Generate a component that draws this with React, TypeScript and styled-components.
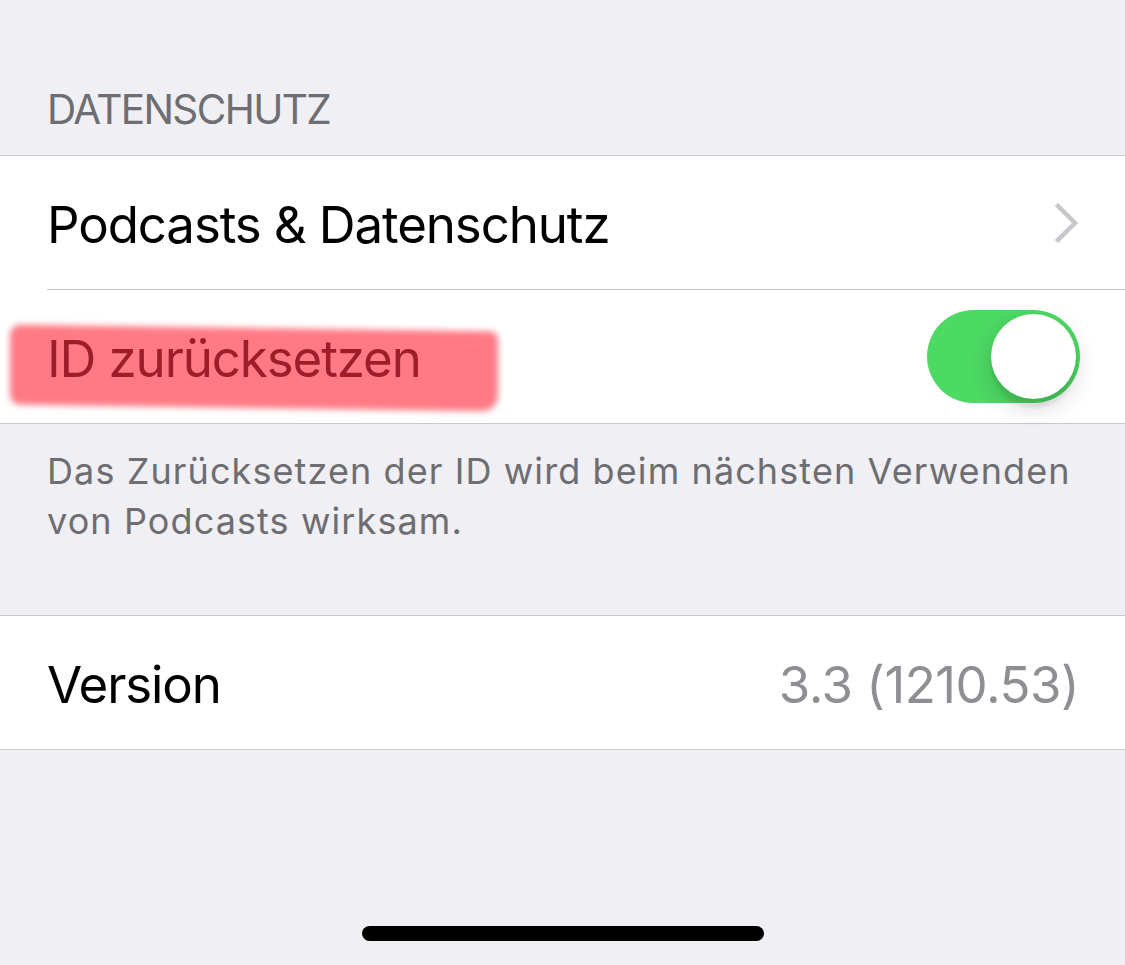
import React from "react";
import styled, { createGlobalStyle } from "styled-components";

const Global = createGlobalStyle`
  html, body { margin: 0; padding: 0; background: #efeff4; }
  body { font-family: Inter, "Noto Sans", sans-serif; -webkit-font-smoothing: antialiased; }
`;

const Page = styled.div`
  width: 1125px;
  height: 965px;
  background: #efeff4;
  display: flex;
  flex-direction: column;
  position: relative;
  overflow: hidden;
`;

const SectionHeader = styled.div`
  height: 155px;
  box-sizing: border-box;
  padding: 0 47px 21px;
  display: flex;
  align-items: flex-end;
  font-size: 40.5px;
  color: #6d6d72;
  letter-spacing: -1.6px;
`;

const Group = styled.div`
  background: #ffffff;
  border-top: 1px solid #c8c7cc;
  border-bottom: 1px solid #c8c7cc;
`;

const Row = styled.div<{ $divider?: boolean }>`
  height: 133px;
  margin-left: 47px;
  padding-right: 46px;
  display: flex;
  align-items: center;
  justify-content: space-between;
  border-bottom: ${(p) => (p.$divider ? "1px solid #c8c7cc" : "none")};
  position: relative;
`;

const Label = styled.span<{ $color?: string }>`
  font-size: 51px;
  color: ${(p) => p.$color || "#000"};
  letter-spacing: -1.1px;
  position: relative;
  z-index: 1;
  margin-top: 4px;
`;

const Value = styled.span`
  font-size: 51px;
  color: #8e8e93;
  letter-spacing: -0.5px;
  margin-top: 4px;
`;

const Highlight = styled.div`
  position: absolute;
  left: -37px;
  top: 38px;
  width: 488px;
  height: 80px;
  background: #ff7a85;
  border-radius: 10px 8px 16px 10px;
  filter: blur(3px);
  transform: skewY(0.8deg);
`;

const Switch = styled.div`
  width: 153px;
  height: 93px;
  border-radius: 47px;
  background: #4cd964;
  position: relative;
  margin-right: -1px;
`;

const Knob = styled.div`
  position: absolute;
  right: 4px;
  top: 4px;
  width: 85px;
  height: 85px;
  border-radius: 50%;
  background: #fff;
  box-shadow: 0 9px 3px rgba(0, 0, 0, 0.06), 0 9px 24px rgba(0, 0, 0, 0.16),
    0 0 1px rgba(0, 0, 0, 0.1);
`;

const Footer = styled.div`
  padding: 22px 47px 0;
  height: 191px;
  box-sizing: border-box;
  font-size: 36px;
  line-height: 50px;
  color: #6d6d72;
  letter-spacing: 1.1px;
`;

const Spacer = styled.div`
  flex: 1;
  display: flex;
  justify-content: center;
  align-items: flex-end;
  padding-bottom: 24px;
`;

const HomeIndicator = styled.div`
  width: 402px;
  height: 15px;
  border-radius: 8px;
  background: #000;
`;

const Chevron = () => (
  <svg width="26" height="40" viewBox="0 0 26 40" style={{ marginRight: -1 }}>
    <path d="M4 3 L21 20 L4 37" fill="none" stroke="#c7c7cc" strokeWidth="4.5" strokeLinecap="square" />
  </svg>
);

export default function App() {
  return (
    <Page>
      <Global />
      <SectionHeader>DATENSCHUTZ</SectionHeader>
      <Group>
        <Row $divider>
          <Label>Podcasts &amp; Datenschutz</Label>
          <Chevron />
        </Row>
        <Row>
          <Highlight />
          <Label $color="#9e1d2a">ID zurücksetzen</Label>
          <Switch>
            <Knob />
          </Switch>
        </Row>
      </Group>
      <Footer>
        Das Zurücksetzen der ID wird beim nächsten Verwenden
        <br />
        von Podcasts wirksam.
      </Footer>
      <Group>
        <Row>
          <Label>Version</Label>
          <Value>3.3 (1210.53)</Value>
        </Row>
      </Group>
      <Spacer>
        <HomeIndicator />
      </Spacer>
    </Page>
  );
}
